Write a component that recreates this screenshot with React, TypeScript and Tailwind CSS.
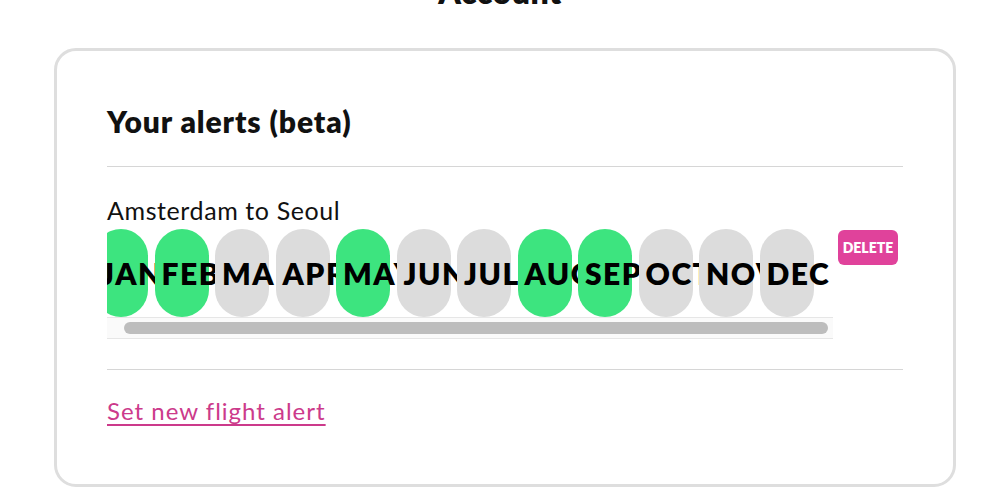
import React from "react";

const months = [
  { label: "JAN", on: true },
  { label: "FEB", on: true },
  { label: "MAR", on: false },
  { label: "APR", on: false },
  { label: "MAY", on: true },
  { label: "JUN", on: false },
  { label: "JUL", on: false },
  { label: "AUG", on: true },
  { label: "SEP", on: true },
  { label: "OCT", on: false },
  { label: "NOV", on: false },
  { label: "DEC", on: false },
];

const MonthPill = ({ label, on }: { label: string; on: boolean }) => (
  <div
    className={`shrink-0 w-[54px] h-[88px] rounded-full flex items-center pl-[7px] text-[30px] tracking-[1.5px] font-extrabold text-black whitespace-nowrap ${
      on ? "bg-[#3de47f]" : "bg-[#dcdcdc]"
    }`}
  >
    {label}
  </div>
);

const App = () => {
  return (
    <div className="w-full min-h-[503px] bg-white overflow-hidden font-['Lato','Noto_Sans',sans-serif] text-[#111]">
      <h1 className="text-center text-[32px] leading-[36px] font-extrabold tracking-[0.5px] -mt-[26px] mb-[38px]">Account</h1>

      <div className="ml-[54px] w-[902px] border-[3px] border-[#dedede] rounded-[22px] px-[50px] pt-[53px] pb-[58px]">
        <h2 className="text-[30px] leading-[34px] font-extrabold tracking-[0.9px]">Your alerts (beta)</h2>
        <div className="h-px bg-[#d6d6d6] mt-[28px]" />

        <div className="pt-[29px]">
          <p className="text-[25px] leading-[28px] tracking-[0.6px]">Amsterdam to Seoul</p>
          <div className="flex items-start gap-[5px] mt-[5px]">
            <div className="w-[726px]">
              <div className="overflow-hidden">
                <div className="flex gap-[6.5px] -ml-[13px]">
                  {months.map((m) => (
                    <MonthPill key={m.label} label={m.label} on={m.on} />
                  ))}
                </div>
              </div>
              <div className="h-[22px] border-y border-[#e6e6e6] bg-[#fafafa] flex items-center pl-[17px] pr-[5px]">
                <div className="h-[12px] w-full rounded-full bg-[#bdbdbd]" />
              </div>
            </div>
            <button className="mt-[1px] w-[60px] h-[35px] rounded-[6px] bg-[#e0429b] text-white text-[14px] font-extrabold">
              DELETE
            </button>
          </div>
        </div>

        <div className="h-px bg-[#d6d6d6] mt-[30px]" />
        <a href="#" className="block mt-[26px] text-[24px] leading-[30px] tracking-[1px] text-[#cc3a8b] underline underline-offset-[4px] decoration-[2px] w-fit">
          Set new flight alert
        </a>
      </div>
    </div>
  );
};

export default App;
